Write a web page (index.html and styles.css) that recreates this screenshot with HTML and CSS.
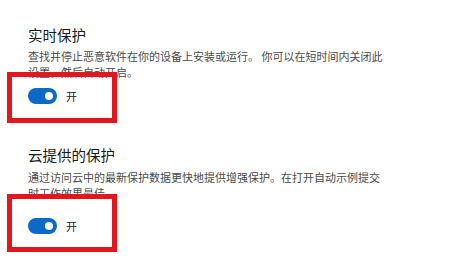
FILE: index.html
```html
<!DOCTYPE html>
<html lang="zh-CN">
<head>
<meta charset="utf-8">
<link rel="stylesheet" href="styles.css">
</head>
<body>
<div class="page">
  <section class="section section-first">
    <h2 class="title">实时保护</h2>
    <p class="desc">查找并停止恶意软件在你的设备上安装或运行。 你可以在短时间内关闭此设置，然后自动开启。</p>
    <div class="toggle-row toggle-row-first">
      <span class="toggle"><span class="knob"></span></span>
      <span class="toggle-label">开</span>
    </div>
  </section>
  <section class="section section-second">
    <h2 class="title">云提供的保护</h2>
    <p class="desc">通过访问云中的最新保护数据更快地提供增强保护。在打开自动示例提交时工作效果最佳。</p>
    <div class="toggle-row toggle-row-second">
      <span class="toggle"><span class="knob"></span></span>
      <span class="toggle-label">开</span>
    </div>
  </section>
  <div class="mark mark-first"></div>
  <div class="mark mark-second"></div>
</div>
</body>
</html>
```

FILE: styles.css
```css
html, body {
  margin: 0;
  padding: 0;
  background: #ffffff;
}
.page {
  position: relative;
  width: 455px;
  height: 267px;
  overflow: hidden;
  font-family: "Noto Sans CJK SC", "Noto Sans", sans-serif;
  color: #1b1b1b;
}
.section {
  padding-left: 28px;
}
.section-first {
  padding-top: 25px;
}
.section-second {
  padding-top: 41px;
}
.title {
  margin: 0;
  font-size: 14.5px;
  line-height: 20px;
  font-weight: 400;
  color: #1a1a1a;
}
.desc {
  margin: 3px 0 0;
  width: 358px;
  font-size: 11px;
  line-height: 16px;
  color: #4a4a4a;
}
.section-second .desc {
  margin-top: 4px;
}
.toggle-row {
  display: flex;
  align-items: center;
  gap: 9px;
  height: 16px;
}
.toggle-row-first {
  margin-top: 8px;
}
.toggle-row-second {
  margin-top: 17px;
}
.toggle {
  display: flex;
  align-items: center;
  justify-content: flex-end;
  width: 29px;
  height: 16px;
  border-radius: 8px;
  background: #0a6ac6;
  box-sizing: border-box;
  padding-right: 4px;
}
.knob {
  width: 8px;
  height: 8px;
  border-radius: 50%;
  background: #ffffff;
}
.toggle-label {
  font-size: 11px;
  line-height: 16px;
  color: #1a1a1a;
}
.mark {
  position: absolute;
  left: 7px;
  width: 110px;
  box-sizing: border-box;
  border: 5px solid #e2161f;
}
.mark-first {
  top: 72px;
  height: 51px;
}
.mark-second {
  top: 194px;
  height: 58px;
}
```
